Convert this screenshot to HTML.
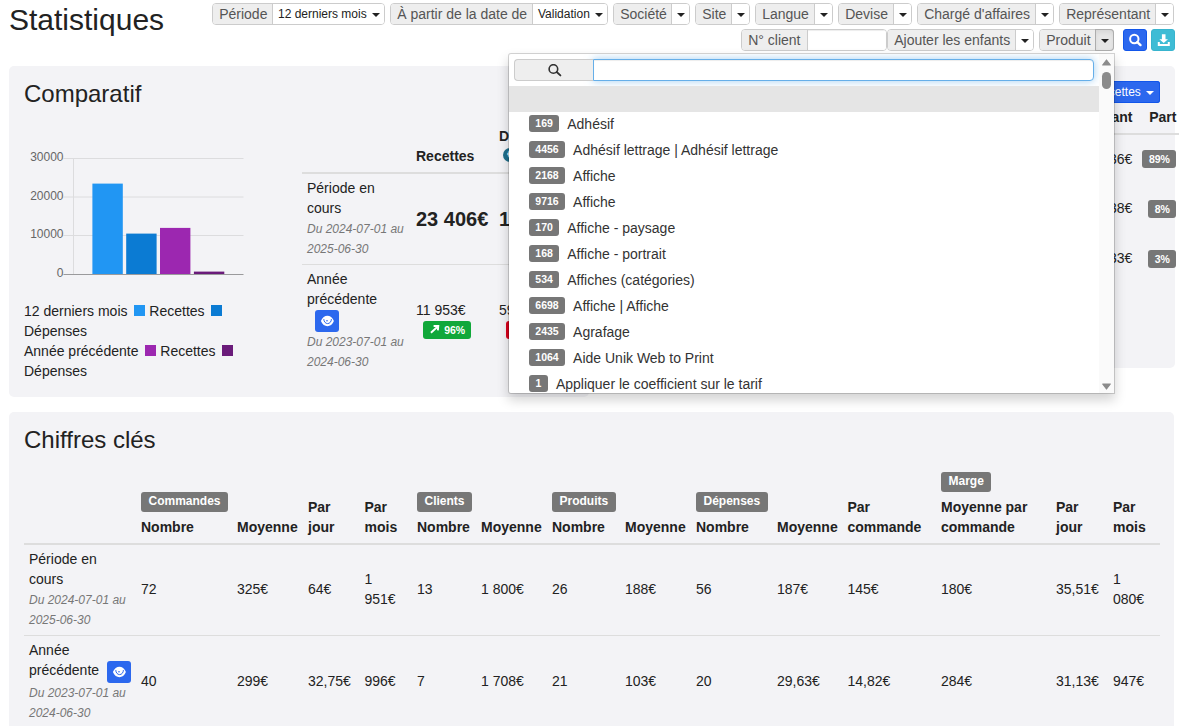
<!DOCTYPE html>
<html lang="fr">
<head>
<meta charset="utf-8">
<title>Statistiques</title>
<style>
*{box-sizing:border-box}
html,body{margin:0;padding:0}
body{width:1179px;height:726px;overflow:hidden;position:relative;background:#fff;color:#222;
  font-family:"Liberation Sans",Arial,sans-serif;font-size:14px;line-height:20px}
h1{position:absolute;left:9px;top:3px;margin:0;font-size:30px;line-height:34px;font-weight:400;color:#222;letter-spacing:0}
/* filters */
.g{position:absolute;display:flex;height:22px;border:1px solid #ccc;border-radius:4px;background:#fff;overflow:hidden}
.g .l{flex:1;white-space:nowrap;overflow:hidden;background:#eee;color:#555;padding:0 0 0 6.2px;line-height:21px;height:20px;font-size:14px;border-right:1px solid #ccc}
.g .s{position:relative;flex:none;font-size:12px;line-height:20px;color:#222;padding:0 0 0 5px;background:#fff}
.g .s.e,.g .s.inp{padding:0}
.g .s:after{content:"";position:absolute;right:4px;top:9px;border-left:4px solid transparent;border-right:4px solid transparent;border-top:4px solid #222}
.g .s.inp:after{display:none}
.g .s.inp{box-shadow:inset 0 1px 1px rgba(0,0,0,.075)}
.g .s.act{background:#e6e6e6;box-shadow:inset 0 0 0 1px #adadad,inset 0 3px 5px rgba(0,0,0,.08);margin:-1px -1px -1px -1px;width:19px;height:22px;border-radius:0 4px 4px 0}
.g .s.act:after{right:5px;top:10px}
.btn{position:absolute;display:block;width:24px;height:22px;border-radius:3px}
.btn svg{position:absolute;left:0;top:0}
/* cards */
.card{position:absolute;background:#f3f3f6;border-radius:5px}
h2{position:absolute;margin:0;font-size:24px;line-height:28px;font-weight:400;color:#222}
table{border-collapse:collapse;position:absolute;table-layout:fixed}
th,td{padding:4px 5px 6px;text-align:left;vertical-align:middle;font-size:14px;line-height:20px;color:#222}
th{font-weight:700;vertical-align:bottom;border-bottom:2px solid #ddd}
td{border-top:1px solid #ddd}
tr:first-child td{border-top:0}
i.d{font-style:italic;font-size:12px;color:#777;line-height:12px}
.lab{display:inline-block;background:#777;color:#fff;font-weight:700;border-radius:3px;text-align:center;vertical-align:top}
.sq{display:inline-block;width:11px;height:11px;vertical-align:baseline;margin:0 .7px 0 2.4px}
td.big{font-size:20px;font-weight:700;padding:5px}
.eur{display:inline-block;width:14px;height:14px;border-radius:7px;background:#1f6f8b;color:#fff;font-size:10px;line-height:14px;text-align:center;margin-left:4px;position:relative;top:-3px}
.eyeline{display:inline-block;height:22px;line-height:22px;vertical-align:top}
.lab.grn,.lab.red{position:relative;background:#10a83a;font-size:10.5px;line-height:18.4px;height:17.7px;padding:0 0 0 21.2px;width:48px;margin-top:1px;text-align:left}
.lab.red{background:#d9001b;width:60px}
.lab svg{position:absolute;left:7px;top:4px}
.rbtn{position:absolute;left:1080px;top:81px;width:80px;height:22px;background:#2c68ee;box-shadow:inset 0 0 0 1px #1256ea;color:#fff;border-radius:3px;font-size:12px;line-height:22px;padding-left:13.500px}
.rbtn .cw{display:inline-block;margin-left:5px;vertical-align:1px;border-left:4px solid transparent;border-right:4px solid transparent;border-top:4px solid #fff}
.lab.pc{font-size:10.5px;line-height:18.400px;height:18px;padding:0 6.500px;margin-top:1.500px}
#t3 td{height:50px;border-top:0}
.dd{position:absolute;left:508px;top:53px;width:607px;height:341px;background:#fff;background-clip:padding-box;border:1px solid rgba(0,0,0,.16);border-radius:3px 0 0 3px;box-shadow:0 6px 12px rgba(0,0,0,.175);overflow:hidden}
.sg{position:absolute;left:5px;top:5px;height:22px;width:579.700px;display:flex}
.sa{width:78.500px;height:22px;border:1px solid #ccc;border-right:0;border-radius:4px 0 0 4px;background:#eee;position:relative}
.sa svg{position:absolute;left:32px;top:4px}
.si{flex:1;height:22px;border:1px solid #66afe9;border-radius:0 4px 4px 0;background:#fff;box-shadow:inset 0 1px 1px rgba(0,0,0,.075),0 0 8px rgba(102,175,233,.6)}
.sel{position:absolute;left:0;top:32.400px;width:590px;height:25.300px;background:#e5e5e5}
.dd ul{list-style:none;margin:0;padding:0;position:absolute;left:0;top:57px;width:590px}
.dd li{height:26px;line-height:26px;padding-left:20px;font-size:14px;color:#333;white-space:nowrap}
.lab.n{font-size:10.5px;line-height:16.700px;height:16.700px;min-width:18.800px;padding:0 6.300px;margin:4.400px 5px 0 0;vertical-align:top}
.sb{position:absolute;left:590px;top:0;width:16px;height:340px;background:#fafafa}
.sb svg{position:absolute;left:2px}
.sb .th{position:absolute;left:3px;top:18px;width:9px;height:17px;border-radius:4.500px;background:#8b8b8b}
.lab.h{font-size:12px;line-height:19.600px;height:19.600px;padding:0 7.500px;margin:0 0 5.400px 0}
.eye svg{position:absolute;left:0;top:0}
.eye{display:inline-block;width:24px;height:22px;background:#2c68ee;border-radius:3px;vertical-align:middle;position:relative;margin-left:8px;top:.6px}
</style>
</head>
<body>
<h1>Statistiques</h1>

<div class="g" style="left:212px;top:3px;width:173px"><span class="l">Période</span><span class="s t" style="width:111px">12 derniers mois</span></div>
<div class="g" style="left:390px;top:3px;width:218px"><span class="l">À partir de la date de</span><span class="s t" style="width:74px">Validation</span></div>
<div class="g" style="left:613px;top:3px;width:77px"><span class="l">Société</span><span class="s e" style="width:17px"></span></div>
<div class="g" style="left:695px;top:3px;width:55px"><span class="l">Site</span><span class="s e" style="width:17px"></span></div>
<div class="g" style="left:755px;top:3px;width:78px"><span class="l">Langue</span><span class="s e" style="width:17px"></span></div>
<div class="g" style="left:838px;top:3px;width:74px"><span class="l">Devise</span><span class="s e" style="width:17px"></span></div>
<div class="g" style="left:917px;top:3px;width:137px"><span class="l">Chargé d'affaires</span><span class="s e" style="width:17px"></span></div>
<div class="g" style="left:1059px;top:3px;width:115px"><span class="l">Représentant</span><span class="s e" style="width:17px"></span></div>
<div class="g" style="left:741px;top:29px;width:146px"><span class="l">N° client</span><span class="s inp" style="width:78px"></span></div>
<div class="g" style="left:887px;top:29px;width:147px"><span class="l">Ajouter les enfants</span><span class="s e" style="width:17px"></span></div>
<div class="g" style="left:1039px;top:29px;width:75px;overflow:visible"><span class="l" style="border-radius:3px 0 0 3px">Produit</span><span class="s e act" style="width:19px"></span></div>
<span class="btn" style="left:1123px;top:29px;background:#2c68ee;border:1px solid #1256ea"><svg style="left:-1px;top:-1px" width="24" height="22" viewBox="0 0 24 22"><circle cx="11.300" cy="10" r="4.200" fill="none" stroke="#fff" stroke-width="2"/><path d="M14.300 13.100 L17.500 16.100" stroke="#fff" stroke-width="2.400" stroke-linecap="round"/></svg></span>
<span class="btn" style="left:1151px;top:29px;background:#3ebcd5;border:1px solid #38b4ce"><svg style="left:-1px;top:-1px" width="24" height="22" viewBox="0 0 24 22"><path d="M10.900 5.200 H14.500 V10.200 H17 L12.700 13.900 L8.400 10.200 H10.900 Z" fill="#fff"/><path d="M6.800 13 H8.800 V14.900 H16.800 V13 H18.800 V16.900 H6.800 Z" fill="#fff"/></svg></span>

<!-- CARD 1 -->
<div class="card" style="left:9px;top:66px;width:580px;height:331px"></div>
<div class="card" style="left:600px;top:66px;width:575px;height:301.6px"></div>
<h2 style="left:24px;top:80px">Comparatif</h2>

<svg style="position:absolute;left:24px;top:140px" width="240" height="150" viewBox="24 140 240 150" font-family="Liberation Sans, Arial, sans-serif">
  <g stroke="#dcdcde" stroke-width="1">
    <line x1="63.5" y1="158.5" x2="243.5" y2="158.5"/>
    <line x1="63.5" y1="197" x2="243.5" y2="197"/>
    <line x1="63.5" y1="235.5" x2="243.5" y2="235.5"/>
    <line x1="73.5" y1="158" x2="73.5" y2="274"/>
  </g>
  <line x1="63.5" y1="274.5" x2="243.5" y2="274.5" stroke="#9a9a9c" stroke-width="1"/>
  <rect x="92.4" y="183.6" width="30.4" height="90.4" fill="#2196f3"/>
  <rect x="126.2" y="233.6" width="30.4" height="40.4" fill="#0b7bd3"/>
  <rect x="160" y="227.9" width="30.4" height="46.1" fill="#9c27b0"/>
  <rect x="193.9" y="271.6" width="30.4" height="2.4" fill="#6a1b7a"/>
  <g font-size="12" fill="#666" text-anchor="end">
    <text x="63.5" y="161.200">30000</text>
    <text x="63.5" y="199.700">20000</text>
    <text x="63.5" y="238.200">10000</text>
    <text x="63.5" y="276.700">0</text>
  </g>
</svg>

<div class="legend" style="position:absolute;left:24px;top:301px;width:250px;line-height:20px;font-size:14px;color:#222">
  <div>12 derniers mois <span class="sq" style="background:#2196f3"></span> Recettes <span class="sq" style="background:#0b7bd3"></span> Dépenses</div>
  <div>Année précédente <span class="sq" style="background:#9c27b0"></span> Recettes <span class="sq" style="background:#6a1b7a"></span> Dépenses</div>
</div>

<table id="t1" style="left:302px;top:122px;width:300px">
  <colgroup><col style="width:109px"><col style="width:83px"><col style="width:108px"></colgroup>
  <thead><tr><th></th><th>Recettes</th><th>Dépenses<br><span class="eur">€</span></th></tr></thead>
  <tbody>
  <tr><td>Période en cours<br><i class="d">Du 2024-07-01 au 2025-06-30</i></td><td class="big">23 406€</td><td class="big">10 438€</td></tr>
  <tr><td>Année précédente<br><span class="eye"><svg width="24" height="22" viewBox="0 0 24 22"><path d="M5.900 11 C8.600 4.100 16.200 4.100 18.900 11 C16.200 17.900 8.600 17.900 5.900 11 Z" fill="#fff"/><path d="M8.800 9.100 A3.800 4.500 0 0 0 16.400 9.100" fill="none" stroke="#2c68ee" stroke-width="1"/><circle cx="12" cy="10.700" r="0.800" fill="#2c68ee"/></svg></span><br><i class="d">Du 2023-07-01 au 2024-06-30</i></td>
      <td>11 953€<br><span class="lab grn" style="margin-left:7px"><svg width="10" height="9" viewBox="0 0 10 9"><path d="M0.900 7.800 L7.800 1.500 M3.600 1 L8.300 0.900 L7.900 5.400" fill="none" stroke="#fff" stroke-width="1.900"/></svg>96%</span></td>
      <td>596€<br><span class="lab red" style="margin-left:7px"><svg width="10" height="9" viewBox="0 0 10 9"><path d="M0.900 7.800 L7.800 1.500 M3.600 1 L8.300 0.900 L7.900 5.400" fill="none" stroke="#fff" stroke-width="1.900"/></svg>1651%</span></td></tr>
  </tbody>
</table>

<!-- right card content -->
<div class="rbtn">Recettes<span class="cw"></span></div>
<table id="t3" style="left:615.4px;top:103px;width:566px">
  <colgroup><col><col style="width:85px"><col style="width:44px"></colgroup>
  <thead><tr><th></th><th style="text-align:right">Montant</th><th style="text-align:right">Part</th></tr></thead>
  <tbody>
  <tr><td></td><td style="text-align:right">20 836€</td><td style="text-align:right"><span class="lab pc">89%</span></td></tr>
  <tr><td></td><td style="text-align:right">1 838€</td><td style="text-align:right"><span class="lab pc">8%</span></td></tr>
  <tr><td></td><td style="text-align:right">733€</td><td style="text-align:right"><span class="lab pc">3%</span></td></tr>
  </tbody>
</table>

<!-- DROPDOWN -->
<div class="dd">
  <div class="sg"><span class="sa"><svg width="16" height="14" viewBox="0 0 16 14"><circle cx="6.400" cy="5" r="4.300" fill="none" stroke="#333" stroke-width="1.600"/><line x1="9.700" y1="8" x2="13.400" y2="11.400" stroke="#333" stroke-width="1.900" stroke-linecap="round"/></svg></span><span class="si"></span></div>
  <div class="sel"></div>
  <ul>
    <li><span class="lab n">169</span> Adhésif</li>
    <li><span class="lab n">4456</span> Adhésif lettrage | Adhésif lettrage</li>
    <li><span class="lab n">2168</span> Affiche</li>
    <li><span class="lab n">9716</span> Affiche</li>
    <li><span class="lab n">170</span> Affiche - paysage</li>
    <li><span class="lab n">168</span> Affiche - portrait</li>
    <li><span class="lab n">534</span> Affiches (catégories)</li>
    <li><span class="lab n">6698</span> Affiche | Affiche</li>
    <li><span class="lab n">2435</span> Agrafage</li>
    <li><span class="lab n">1064</span> Aide Unik Web to Print</li>
    <li><span class="lab n">1</span> Appliquer le coefficient sur le tarif</li>
  </ul>
  <div class="sb"><svg style="top:4px" width="11" height="9" viewBox="0 0 11 9"><path d="M1.700 7 L5.500 2 L9.300 7 Z" fill="#8b8b8b" stroke="#8b8b8b" stroke-width="1.200" stroke-linejoin="round"/></svg><span class="th"></span><svg style="top:328px" width="11" height="9" viewBox="0 0 11 9"><path d="M1.700 2 L5.500 7 L9.300 2 Z" fill="#8b8b8b" stroke="#8b8b8b" stroke-width="1.200" stroke-linejoin="round"/></svg></div>
</div>

<!-- CARD 2 -->
<div class="card" style="left:9px;top:412px;width:1165px;height:330px"></div>
<h2 style="left:24px;top:426px">Chiffres clés</h2>
<table id="t2" style="left:24px;top:468px;width:1136px">
  <colgroup>
    <col style="width:112px"><col style="width:96px"><col style="width:71px"><col style="width:56.500px"><col style="width:52.500px">
    <col style="width:64px"><col style="width:71px"><col style="width:73px"><col style="width:71px"><col style="width:81px">
    <col style="width:70.500px"><col style="width:93.500px"><col style="width:115px"><col style="width:57px"><col style="width:52px">
  </colgroup>
  <thead><tr>
    <th></th>
    <th><span class="lab h">Commandes</span><br>Nombre</th><th>Moyenne</th><th>Par jour</th><th>Par mois</th>
    <th><span class="lab h">Clients</span><br>Nombre</th><th>Moyenne</th>
    <th><span class="lab h">Produits</span><br>Nombre</th><th>Moyenne</th>
    <th><span class="lab h">Dépenses</span><br>Nombre</th><th>Moyenne</th><th>Par commande</th>
    <th><span class="lab h">Marge</span><br>Moyenne par commande</th><th>Par jour</th><th>Par mois</th>
  </tr></thead>
  <tbody>
  <tr><td>Période en cours<br><i class="d">Du 2024-07-01 au 2025-06-30</i></td>
    <td>72</td><td>325€</td><td>64€</td><td>1 951€</td><td>13</td><td>1 800€</td><td>26</td><td>188€</td><td>56</td><td>187€</td><td>145€</td><td>180€</td><td>35,51€</td><td>1 080€</td></tr>
  <tr><td>Année <span style="white-space:nowrap">précédente <span class="eye" style="margin-left:4.200px"><svg width="24" height="22" viewBox="0 0 24 22"><path d="M5.900 11 C8.600 4.100 16.200 4.100 18.900 11 C16.200 17.900 8.600 17.900 5.900 11 Z" fill="#fff"/><path d="M8.800 9.100 A3.800 4.500 0 0 0 16.400 9.100" fill="none" stroke="#2c68ee" stroke-width="1"/><circle cx="12" cy="10.700" r="0.800" fill="#2c68ee"/></svg></span></span><br><i class="d">Du 2023-07-01 au 2024-06-30</i></td>
    <td>40</td><td>299€</td><td>32,75€</td><td>996€</td><td>7</td><td>1 708€</td><td>21</td><td>103€</td><td>20</td><td>29,63€</td><td>14,82€</td><td>284€</td><td>31,13€</td><td>947€</td></tr>
  </tbody>
</table>

</body>
</html>
